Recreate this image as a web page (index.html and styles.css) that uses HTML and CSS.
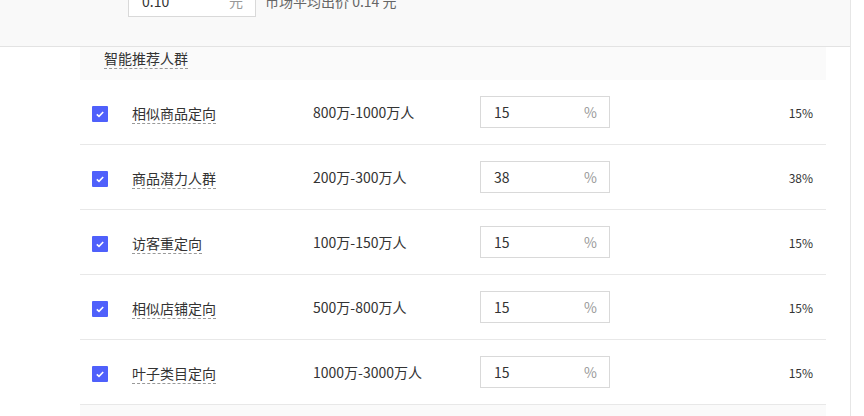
FILE: index.html
```html
<!DOCTYPE html>
<html lang="zh-CN">
<head>
  <meta charset="UTF-8">
  <title>智能推荐人群</title>
  <link rel="stylesheet" href="styles.css">
</head>
<body>
  <div class="page">
    <div class="bid-section">
      <div class="bid-row">
        <div class="bid-input">
          <span class="bid-value">0.10</span>
          <span class="unit">元</span>
        </div>
        <span class="bid-tip">市场平均出价 0.14 元</span>
      </div>
    </div>

    <div class="crowd-table">
      <div class="crowd-head"><span class="dashed">智能推荐人群</span></div>

      <div class="crowd-row">
        <div class="cell-check"><span class="checkbox"><svg viewBox="0 0 16 16"><path d="M4.8 8.3 L7 10.3 L11.2 6" /></svg></span></div>
        <div class="cell-name"><span class="dashed">相似商品定向</span></div>
        <div class="cell-range">800万-1000万人</div>
        <div class="cell-input"><div class="pct-input"><span>15</span><span class="unit">%</span></div></div>
        <div class="cell-value">15%</div>
      </div>

      <div class="crowd-row">
        <div class="cell-check"><span class="checkbox"><svg viewBox="0 0 16 16"><path d="M4.8 8.3 L7 10.3 L11.2 6" /></svg></span></div>
        <div class="cell-name"><span class="dashed">商品潜力人群</span></div>
        <div class="cell-range">200万-300万人</div>
        <div class="cell-input"><div class="pct-input"><span>38</span><span class="unit">%</span></div></div>
        <div class="cell-value">38%</div>
      </div>

      <div class="crowd-row">
        <div class="cell-check"><span class="checkbox"><svg viewBox="0 0 16 16"><path d="M4.8 8.3 L7 10.3 L11.2 6" /></svg></span></div>
        <div class="cell-name"><span class="dashed">访客重定向</span></div>
        <div class="cell-range">100万-150万人</div>
        <div class="cell-input"><div class="pct-input"><span>15</span><span class="unit">%</span></div></div>
        <div class="cell-value">15%</div>
      </div>

      <div class="crowd-row">
        <div class="cell-check"><span class="checkbox"><svg viewBox="0 0 16 16"><path d="M4.8 8.3 L7 10.3 L11.2 6" /></svg></span></div>
        <div class="cell-name"><span class="dashed">相似店铺定向</span></div>
        <div class="cell-range">500万-800万人</div>
        <div class="cell-input"><div class="pct-input"><span>15</span><span class="unit">%</span></div></div>
        <div class="cell-value">15%</div>
      </div>

      <div class="crowd-row">
        <div class="cell-check"><span class="checkbox"><svg viewBox="0 0 16 16"><path d="M4.8 8.3 L7 10.3 L11.2 6" /></svg></span></div>
        <div class="cell-name"><span class="dashed">叶子类目定向</span></div>
        <div class="cell-range">1000万-3000万人</div>
        <div class="cell-input"><div class="pct-input"><span>15</span><span class="unit">%</span></div></div>
        <div class="cell-value">15%</div>
      </div>

      <div class="crowd-foot"></div>
    </div>
  </div>
</body>
</html>
```

FILE: styles.css
```css
body {
  margin: 0;
  font-family: "Noto Sans CJK SC", "Noto Sans", sans-serif;
  font-size: 14px;
  color: #333;
  background-color: #fff;
  overflow: hidden;
}
.page {
  width: 850px;
  height: 416px;
  border-right: 1px solid #e6e6e6;
}
.bid-section {
  display: flow-root;
  height: 46px;
  background-color: #f9f9f9;
  border-bottom: 1px solid #e3e3e3;
}
.bid-row {
  display: flex;
  align-items: center;
  margin-top: -15px;
  padding-left: 128px;
}
.bid-input {
  display: flex;
  justify-content: space-between;
  align-items: center;
  box-sizing: border-box;
  width: 128px;
  height: 32px;
  padding: 0 12px 0 13px;
  background-color: #fff;
  border: 1px solid #d9d9d9;
}
.unit {
  color: #999;
}
.bid-tip {
  margin-left: 9px;
  color: #666;
}
.crowd-table {
  width: 746px;
  margin-left: 80px;
}
.crowd-head {
  height: 33px;
  box-sizing: border-box;
  padding: 1px 0 0 24px;
  background-color: #fafafa;
}
.dashed {
  display: inline-block;
  line-height: 20px;
  border-bottom: 1px dashed #999;
}
.crowd-row {
  display: grid;
  grid-template-columns: 52px 181px 167px 130px 1fr;
  align-items: center;
  height: 65px;
  box-sizing: border-box;
  padding-right: 13px;
  border-bottom: 1px solid #e8e8e8;
}
.cell-check {
  padding-left: 12px;
  display: flex;
}
.checkbox {
  display: block;
  width: 16px;
  height: 16px;
  margin-top: 3px;
  background-color: #4f60fb;
  border-radius: 1px;
}
.checkbox svg {
  display: block;
  width: 16px;
  height: 16px;
  fill: none;
  stroke: #fff;
  stroke-width: 1.6;
}
.cell-name {
  padding-top: 2px;
}
.pct-input {
  display: flex;
  justify-content: space-between;
  align-items: center;
  box-sizing: border-box;
  width: 130px;
  height: 32px;
  padding: 0 12px 0 13px;
  border: 1px solid #d9d9d9;
  background-color: #fff;
}
.cell-value {
  text-align: right;
  font-size: 12px;
}
.crowd-foot {
  height: 20px;
  background-color: #fafafa;
}
```
